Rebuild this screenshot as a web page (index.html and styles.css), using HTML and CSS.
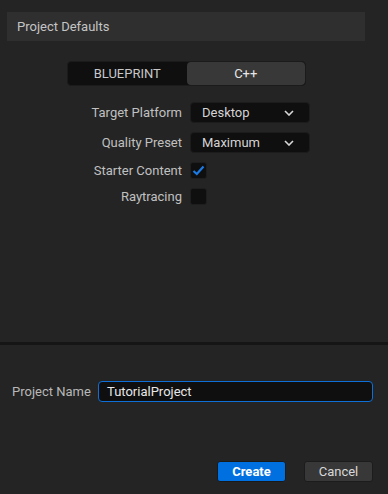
FILE: index.html
```html
<!DOCTYPE html>
<html lang="en">
<head>
    <meta charset="UTF-8">
    <title>New Project</title>
    <link rel="stylesheet" href="styles.css">
</head>
<body>

<div class="defaults">
    <div class="section-header">Project Defaults</div>

    <div class="toggle">
        <div class="toggle-option">BLUEPRINT</div>
        <div class="toggle-option active">C++</div>
    </div>

    <div class="settings">
        <div class="setting-label">Target Platform</div>
        <div class="dropdown">
            <span>Desktop</span>
            <svg width="10" height="6" viewBox="0 0 10 6"><path d="M1 1 L5 5 L9 1" fill="none" stroke="#d8d8d8" stroke-width="1.6"/></svg>
        </div>

        <div class="setting-label">Quality Preset</div>
        <div class="dropdown">
            <span>Maximum</span>
            <svg width="10" height="6" viewBox="0 0 10 6"><path d="M1 1 L5 5 L9 1" fill="none" stroke="#d8d8d8" stroke-width="1.6"/></svg>
        </div>

        <div class="setting-label">Starter Content</div>
        <div class="checkbox">
            <svg width="13" height="11" viewBox="0 0 13 11"><path d="M1.5 6 L4.8 9 L11.5 1.5" fill="none" stroke="#1a7be6" stroke-width="2.2"/></svg>
        </div>

        <div class="setting-label">Raytracing</div>
        <div class="checkbox"></div>
    </div>
</div>

<div class="divider"></div>

<div class="bottom">
    <div class="name-row">
        <div class="name-label">Project Name</div>
        <div class="name-input">TutorialProject</div>
    </div>

    <div class="actions">
        <div class="button primary">Create</div>
        <div class="button">Cancel</div>
    </div>
</div>

</body>
</html>
```

FILE: styles.css
```css
body {
    margin: 0;
    background: #242424;
    font-family: Roboto, "Noto Sans", sans-serif;
    font-size: 13px;
    color: #c2c2c2;
    width: 388px;
    height: 494px;
    overflow: hidden;
}

.defaults {
    height: 342px;
    padding: 12px 23px 0 7px;
    box-sizing: border-box;
}

.section-header {
    height: 29px;
    background: #2f2f2f;
    padding-left: 10px;
    display: flex;
    align-items: center;
    color: #c4c4c4;
}

/* BLUEPRINT / C++ switch */
.toggle {
    display: flex;
    width: 239px;
    height: 25px;
    margin: 20px 0 0 60px;
    background: #0f0f0f;
    border: 1px solid #1b1b1b;
    border-radius: 4px;
    box-sizing: border-box;
}

.toggle-option {
    flex: 1;
    display: flex;
    align-items: center;
    justify-content: center;
    color: #c8c8c8;
    border-radius: 4px;
}

.toggle-option.active {
    background: #383838;
    color: #e6e6e6;
}

.settings {
    display: grid;
    grid-template-columns: 175px 120px;
    column-gap: 8px;
    row-gap: 9px;
    margin-top: 16px;
    align-items: center;
}

.setting-label {
    text-align: right;
    color: #c0c0c0;
}

.dropdown {
    height: 21px;
    background: #0f0f0f;
    border: 1px solid #1c1c1c;
    border-radius: 4px;
    box-sizing: border-box;
    display: flex;
    align-items: center;
    justify-content: space-between;
    padding: 0 15px 0 11px;
    color: #d4d4d4;
}

.checkbox {
    width: 17px;
    height: 17px;
    background: #0f0f0f;
    border: 1px solid #1e1e1e;
    border-radius: 3px;
    box-sizing: border-box;
    display: flex;
    align-items: center;
    justify-content: center;
}

.divider {
    height: 3px;
    background: #151515;
}

.bottom {
    padding: 36px 15px 0 12px;
}

.name-row {
    display: flex;
    align-items: center;
}

.name-label {
    width: 86px;
    flex: none;
    color: #b8b8b8;
}

.name-input {
    flex: 1;
    height: 21px;
    box-sizing: border-box;
    background: #0f0f0f;
    border: 1px solid #0f6fd8;
    border-radius: 4px;
    padding-left: 8px;
    display: flex;
    align-items: center;
    color: #e8e8e8;
}

.actions {
    display: flex;
    justify-content: flex-end;
    gap: 18px;
    margin-top: 59px;
}

.button {
    width: 69px;
    height: 21px;
    box-sizing: border-box;
    border-radius: 3px;
    background: #383838;
    border: 1px solid #1c1c1c;
    display: flex;
    align-items: center;
    justify-content: center;
    color: #d8d8d8;
}

.button.primary {
    background: #0070e0;
    border-color: #1a1a1a;
    color: #ffffff;
    font-weight: bold;
}
```
